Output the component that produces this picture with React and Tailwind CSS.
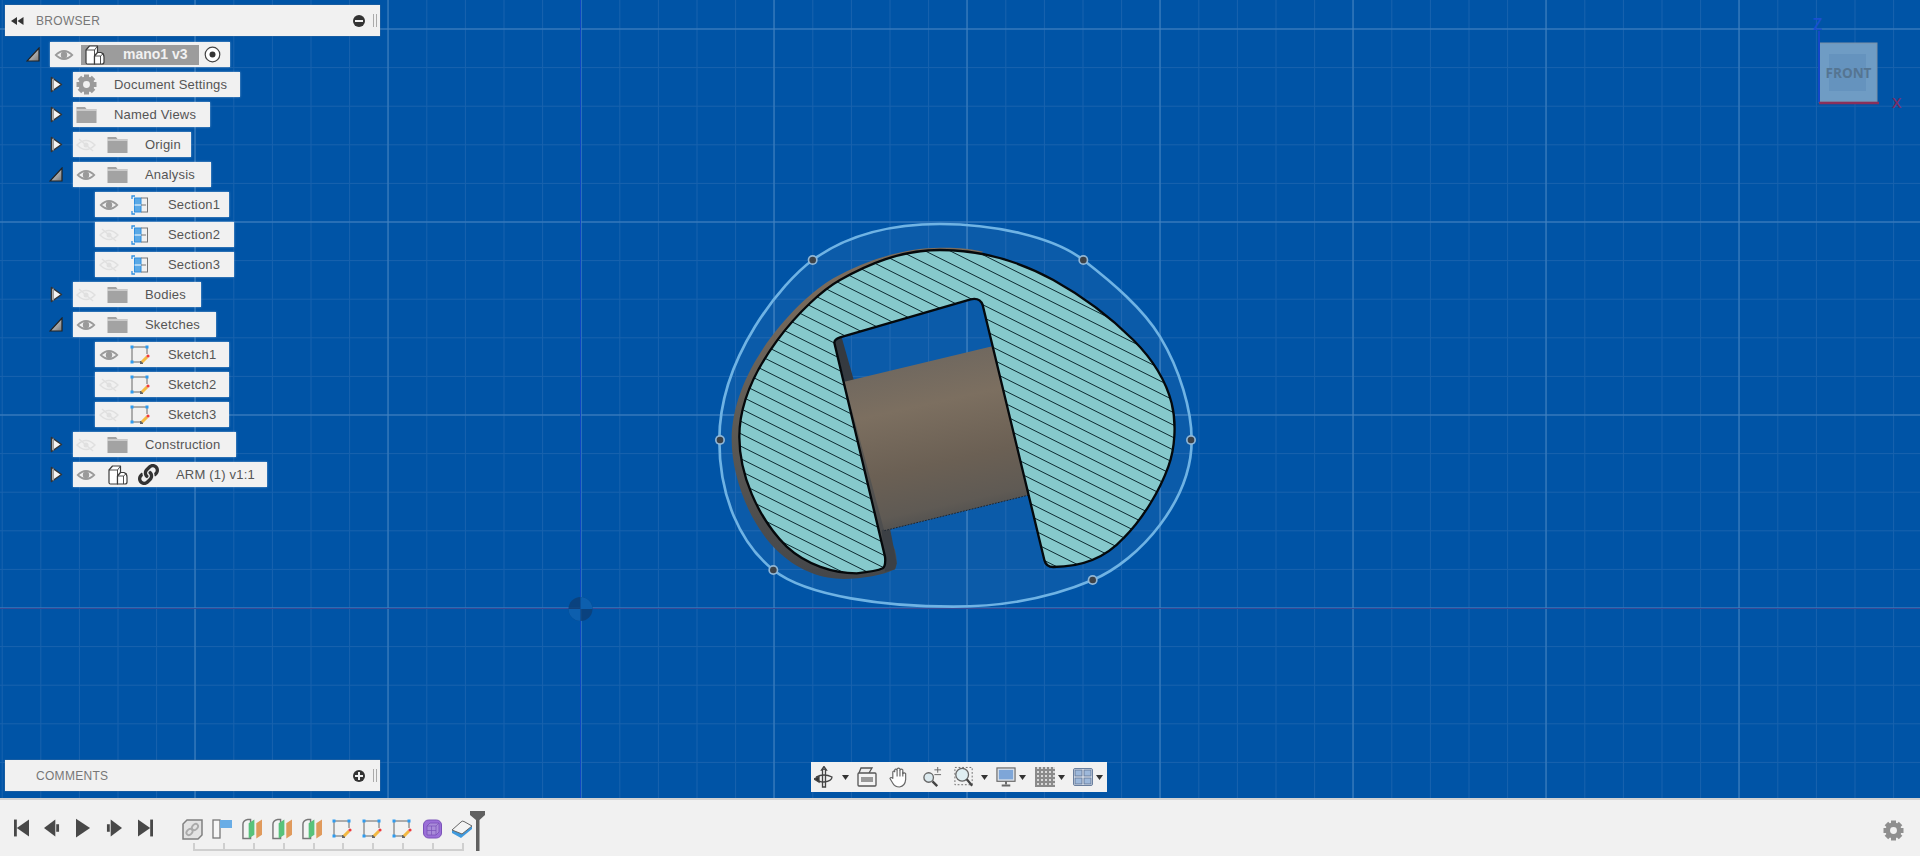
import { FaLink } from 'react-icons/fa'

const FONT = "font-['Liberation_Sans',Arial,sans-serif]"

// grid of the design plane, minor every 38.6px, major every 193px
const minorX = Array.from({ length: 50 }, (_, i) => 2.2 + i * 38.6)
const minorY = Array.from({ length: 22 }, (_, i) => 29 + i * 38.6)
const majorX = Array.from({ length: 10 }, (_, i) => 195 + i * 193)
const majorY = Array.from({ length: 4 }, (_, i) => 29 + i * 193)

const HANDLES = [[338, 150], [1150, 150], [60, 690], [1473, 690], [220, 1080], [1178, 1110]]

const OUTLINE = 'M720 42 C560 42 430 83 338 150 C248 216 58 440 58 690 C58 860 120 1000 220 1080 C320 1160 560 1190 760 1190 C920 1190 1060 1160 1178 1110 C1320 1050 1475 870 1475 690 C1475 600 1440 480 1380 380 C1330 297 1240 220 1150 150 C1060 80 880 42 720 42 Z'

const SECTION = 'M403 398 Q403 388 420 382 L812 268 Q840 262 848 285 L1033 1050 Q1038 1071 1060 1071 C1150 1071 1220 1040 1270 985 C1330 925 1380 840 1405 770 C1425 715 1430 640 1415 580 C1395 500 1350 440 1300 390 C1230 320 1150 260 1060 210 C960 155 840 120 720 120 C600 120 500 165 420 210 C320 266 118 480 118 680 C118 790 170 920 260 1010 C320 1065 400 1090 470 1090 Q530 1084 548 1075 Q558 1068 555 1040 Z'

const BACK = 'M850 125 C800 113 760 113 720 113 C600 113 480 160 400 205 C300 262 95 470 95 690 C95 800 150 950 240 1030 C300 1085 370 1107 430 1107 C490 1107 550 1095 585 1078 Q595 1060 585 1020 L555 950 L430 500 L400 395 Z'

function Viewport() {
  const hatch = Array.from({ length: 42 }, (_, i) => -290 + i * 37.5)
  return (
    <svg className="absolute inset-0 w-full h-full" viewBox="0 0 1920 798">
      <defs>
        <clipPath id="sec"><path d={SECTION} /></clipPath>
        <linearGradient id="cyl" gradientUnits="userSpaceOnUse" x1="660" y1="430" x2="770" y2="930">
          <stop offset="0" stopColor="#6e675f" />
          <stop offset="0.3" stopColor="#7c6f60" />
          <stop offset="0.65" stopColor="#6b6054" />
          <stop offset="0.9" stopColor="#5f5a54" />
          <stop offset="1" stopColor="#50504f" />
        </linearGradient>
        <linearGradient id="back" gradientUnits="userSpaceOnUse" x1="300" y1="200" x2="300" y2="1100">
          <stop offset="0" stopColor="#7b6c5c" />
          <stop offset="0.5" stopColor="#5d5a55" />
          <stop offset="1" stopColor="#45474a" />
        </linearGradient>
      </defs>
      {minorX.map(x => <line key={x} x1={x} x2={x} y1="0" y2="798" stroke="#1963ae" strokeWidth="1" />)}
      {minorY.map(y => <line key={y} x1="0" x2="1920" y1={y} y2={y} stroke="#1963ae" strokeWidth="1" />)}
      {majorX.map(x => <line key={x} x1={x} x2={x} y1="0" y2="798" stroke="#4584c2" strokeWidth="1" />)}
      {majorY.map(y => <line key={y} x1="0" x2="1920" y1={y} y2={y} stroke="#4584c2" strokeWidth="1" />)}
      <line x1="580.500" x2="580.500" y1="0" y2="798" stroke="#0b46c4" strokeWidth="1" />
      <line x1="0" x2="1920" y1="608.500" y2="608.500" stroke="#3a4a96" strokeWidth="1" />
      <circle cx="580.500" cy="609" r="12" fill="#0c3f78" opacity="0.85" />
      <path d="M580.500 597 A12 12 0 0 1 592.500 609 L580.500 609 Z" fill="#0d5fae" />
      <path d="M580.500 621 A12 12 0 0 1 568.500 609 L580.500 609 Z" fill="#0d5fae" />

      <g transform="translate(700 210) scale(0.33333)">
        <path d={OUTLINE} fill="#fff" fillOpacity="0.045" stroke="#6fb3e4" strokeWidth="8" />
        {/* back of the part */}
        <path d={BACK} fill="url(#back)" />
        <path d="M403 395 L425 382 L462 512 L435 520 Z" fill="#353a40" />
        <path d="M545 960 L570 955 L590 1060 L585 1078 L555 1085 Z" fill="#3c4045" />
        <path d="M433 515 L880 408 L987 855 L553 962 Z" fill="url(#cyl)" />
        <path d="M553 962 L987 855" stroke="#1b2430" strokeWidth="3" strokeDasharray="5 4" />
        <path d={SECTION} fill="#86c9cc" />
        <g clipPath="url(#sec)">
          {hatch.map(y => <line key={y} x1="0" x2="1500" y1={y} y2={y + 750} stroke="#0d2a30" strokeWidth="3" />)}
        </g>
        <path d={SECTION} fill="none" stroke="#05090c" strokeWidth="7" strokeLinejoin="round" />
        {HANDLES.map(([x, y]) => (
          <g key={x}>
            <circle cx={x} cy={y} r="15" fill="#8fb6d6" />
            <circle cx={x} cy={y} r="10" fill="#3d4247" />
          </g>
        ))}
      </g>
    </svg>
  )
}

function Gear({ size = 21, color = '#9a9a9a', className }) {
  const teeth = [0, 45, 90, 135, 180, 225, 270, 315]
  return (
    <svg className={className} width={size} height={size} viewBox="0 0 21 21">
      {teeth.map(a => (
        <rect key={a} x="8" y="0.500" width="5" height="5" fill={color} transform={`rotate(${a} 10.500 10.500)`} />
      ))}
      <circle cx="10.500" cy="10.500" r="5.700" fill="none" stroke={color} strokeWidth="4.500" />
    </svg>
  )
}

function Eye({ off }) {
  if (off) {
    return (
      <svg width="20" height="14" viewBox="0 0 20 14" fill="none" stroke="#e0e0e0" strokeWidth="1.500">
        <path d="M1 7 Q10 -2 19 7 Q10 16 1 7 Z" />
        <path d="M3 1 L17 13" />
        <circle cx="10" cy="7" r="2.500" fill="#e0e0e0" stroke="none" />
      </svg>
    )
  }
  return (
    <svg width="20" height="14" viewBox="0 0 20 14" fill="none">
      <path d="M0.500 7 Q10 -3 19.500 7 Q10 17 0.500 7 Z" fill="#9a9a9a" />
      <path d="M3 7 Q10 1 17 7 Q10 13 3 7 Z" fill="#f1f1f1" />
      <circle cx="10" cy="7" r="3.200" fill="#9a9a9a" />
    </svg>
  )
}

function Folder() {
  return (
    <svg width="21" height="18" viewBox="0 0 21 18">
      <path d="M0.500 1 H9 L10.500 3 H20.500 V17 H0.500 Z" fill="#a3a3a3" />
      <path d="M0.500 4 H20.500" stroke="#f1f1f1" strokeWidth="1" />
    </svg>
  )
}

function Body({ size = 20 }) {
  return (
    <svg width={size} height={size} viewBox="0 0 20 20" fill="#fff" stroke="#3c3c3c" strokeWidth="1.200" strokeLinejoin="round">
      <path d="M1 5 L4.500 1 H12.500 V8 L9.500 11 V19 H2.500 Q1 19 1 17.500 Z" />
      <path d="M1 5 H9.500 L12.500 1 M9.500 5 V11" fill="none" strokeWidth="0.900" />
      <path d="M9.500 11 L12.500 7.500 H16 Q19 8.500 19 12 V17 Q19 19 17 19 H9.500 Z" />
      <path d="M9.500 11 H15.500 L18.500 8.500 M15.500 11 V19" fill="none" strokeWidth="0.900" />
    </svg>
  )
}

function SectionIcon() {
  return (
    <svg width="18" height="20" viewBox="0 0 18 20" fill="none">
      <path d="M1 4 V1 H4 M1 16 V19 H4" stroke="#2e8fe0" strokeWidth="1.300" />
      <rect x="3.500" y="3" width="6.500" height="14" fill="#5aa9e6" stroke="#2e8fe0" />
      <path d="M3.500 10 H10" stroke="#fff" strokeWidth="1" />
      <path d="M10 3 H17 M10 10 H15 M10 17 H17 M16.500 3 V17" stroke="#777" strokeWidth="1" />
    </svg>
  )
}

function SketchIcon() {
  return (
    <svg width="20" height="20" viewBox="0 0 20 20" fill="none">
      <path d="M2 2 H17 M2 2 V17 M2 17 H12 M17 2 V9" stroke="#666" strokeWidth="1" />
      <rect x="0.500" y="0.500" width="3" height="3" fill="#2e9bf0" />
      <rect x="15.500" y="0.500" width="3" height="3" fill="#2e9bf0" />
      <rect x="0.500" y="15.500" width="3" height="3" fill="#2e9bf0" />
      <rect x="10" y="16" width="3" height="3" fill="#666" />
      <path d="M12 17 L17 12" stroke="#f4b942" strokeWidth="3" />
      <circle cx="18" cy="11" r="1.600" fill="#ee3b3b" />
    </svg>
  )
}

function Arrow({ open }) {
  if (open) {
    return (
      <svg width="14" height="15" viewBox="0 0 14 15">
        <defs>
          <linearGradient id="tri" x1="0" y1="0" x2="1" y2="1">
            <stop offset="0" stopColor="#eee" />
            <stop offset="1" stopColor="#777" />
          </linearGradient>
        </defs>
        <path d="M13 1 V14 H1 Z" fill="url(#tri)" stroke="#222" strokeWidth="1.200" />
      </svg>
    )
  }
  return (
    <svg width="13" height="17" viewBox="0 0 13 17">
      <path d="M1.500 1.500 L11.500 8.500 L1.500 15.500 Z" fill="#f4f4f4" stroke="#333" strokeWidth="1.500" strokeLinejoin="round" />
      <path d="M3.200 2.500 V14.500" stroke="#999" strokeWidth="1.500" />
    </svg>
  )
}

// one tree row: level shifts the row in from the left
function Row({ level = 0, open, width, children }) {
  const indent = level === 0 ? 'ml-[50px]' : level === 1 ? 'ml-[73px]' : 'ml-[95px]'
  return (
    <div className={`relative h-[25px] flex items-center bg-[#f1f1f1] shadow-[0_0_2px_rgba(255,255,255,0.5)] ${indent}`} style={{ width }}>
      {open !== undefined && (
        <div className="absolute left-[-24px] top-0 h-[25px] w-[14px] flex items-center justify-center">
          <Arrow open={open} />
        </div>
      )}
      {children}
    </div>
  )
}

function Slot({ w, children }) {
  return <div className="flex items-center justify-center flex-none" style={{ width: w }}>{children}</div>
}

function Label({ children, pad }) {
  return <span className={`whitespace-nowrap text-[13px] tracking-[0.2px] text-[#555] pt-px ${pad}`}>{children}</span>
}

function FolderRow({ width, open, off, label }) {
  return (
    <Row level={1} open={open} width={width}>
      <div className="w-[34px] pl-[3px] flex-none"><Eye off={off} /></div>
      <Slot w="21px"><Folder /></Slot>
      <Label pad="pl-[17px]">{label}</Label>
    </Row>
  )
}

function LeafRow({ width, off, label, icon }) {
  return (
    <Row level={2} width={width}>
      <div className="w-[34px] pl-[4px] flex-none"><Eye off={off} /></div>
      <Slot w="21px">{icon}</Slot>
      <Label pad="pl-[18px]">{label}</Label>
    </Row>
  )
}

function Browser() {
  return (
    <div className="absolute left-0 top-0 w-[400px]">
      <div className="ml-[5px] mt-[5px] w-[375px] h-[31px] bg-[#f1f1f1] flex items-center shadow-[0_0_1px_#888]">
        <svg className="ml-[6px]" width="13" height="8" viewBox="0 0 13 8"><path d="M6 0 V8 L0 4 Z M12.500 0 V8 L6.500 4 Z" fill="#333" /></svg>
        <span className="ml-[12px] text-[12px] tracking-[0.3px] text-[#777]">BROWSER</span>
        <div className="ml-auto w-[12px] h-[12px] rounded-full bg-[#333] flex items-center justify-center">
          <div className="w-[8px] h-[2px] bg-[#f1f1f1]" />
        </div>
        <div className="ml-[8px] mr-[3px] w-[4px] h-[13px] border-x border-[#aaa]" />
      </div>
      <div className="mt-[6px] flex flex-col gap-[5px]">
        <Row open width="180px">
          <div className="w-[31px] pl-[4px] flex-none"><Eye /></div>
          <div className="w-[118px] h-[20px] bg-[#9c9c9c] flex items-center flex-none pl-[4px]">
            <Body />
            <span className="ml-[18px] text-[14px] font-bold text-[#f1f1f1]">mano1 v3</span>
          </div>
          <svg className="ml-[5px]" width="17" height="17" viewBox="0 0 17 17">
            <circle cx="8.500" cy="8.500" r="7.300" fill="#fff" stroke="#444" strokeWidth="1.200" />
            <circle cx="8.500" cy="8.500" r="3" fill="#333" />
          </svg>
        </Row>
        <Row level={1} open={false} width="167px">
          <div className="pl-[3px] w-[27px] flex-none"><Gear /></div>
          <Label pad="pl-[14px]">Document Settings</Label>
        </Row>
        <Row level={1} open={false} width="137px">
          <div className="pl-[3px] w-[27px] flex-none"><Folder /></div>
          <Label pad="pl-[14px]">Named Views</Label>
        </Row>
        <FolderRow width="118px" open={false} off label="Origin" />
        <FolderRow width="138px" open label="Analysis" />
        <LeafRow width="134px" label="Section1" icon={<SectionIcon />} />
        <LeafRow width="139px" off label="Section2" icon={<SectionIcon />} />
        <LeafRow width="139px" off label="Section3" icon={<SectionIcon />} />
        <FolderRow width="128px" open={false} off label="Bodies" />
        <FolderRow width="143px" open label="Sketches" />
        <LeafRow width="134px" label="Sketch1" icon={<SketchIcon />} />
        <LeafRow width="134px" off label="Sketch2" icon={<SketchIcon />} />
        <LeafRow width="134px" off label="Sketch3" icon={<SketchIcon />} />
        <FolderRow width="163px" open={false} off label="Construction" />
        <Row level={1} open={false} width="194px">
          <div className="w-[34px] pl-[3px] flex-none"><Eye /></div>
          <Slot w="21px"><Body /></Slot>
          <FaLink className="ml-[10px] text-[21px] text-[#333] flex-none" />
          <Label pad="pl-[17px]">ARM (1) v1:1</Label>
        </Row>
      </div>
    </div>
  )
}

function Comments() {
  return (
    <div className="absolute left-[5px] top-[760px] w-[375px] h-[31px] bg-[#f1f1f1] flex items-center shadow-[0_0_1px_#888]">
      <span className="ml-[31px] text-[12px] tracking-[0.3px] text-[#777]">COMMENTS</span>
      <div className="ml-auto w-[12px] h-[12px] rounded-full bg-[#333] relative">
        <div className="absolute left-[2px] top-[5px] w-[8px] h-[2px] bg-[#f1f1f1]" />
        <div className="absolute left-[5px] top-[2px] w-[2px] h-[8px] bg-[#f1f1f1]" />
      </div>
      <div className="ml-[8px] mr-[3px] w-[4px] h-[13px] border-x border-[#aaa]" />
    </div>
  )
}

function Caret({ className }) {
  return <svg width="7" height="5" viewBox="0 0 7 5" className={`flex-none ${className}`}><path d="M0 0 H7 L3.500 5 Z" fill="#333" /></svg>
}

function NavBar() {
  return (
    <div className="absolute left-[811px] top-[762px] w-[296px] h-[30px] bg-[#f1f1f1] flex items-center pl-[3px]">
      <svg className="flex-none" width="20" height="22" viewBox="0 0 20 22" fill="none" stroke="#444" strokeWidth="1.300">
        <path d="M10 0.500 L7.500 4 H12.500 Z" fill="#888" />
        <path d="M8.500 4 V21 H11.500 V4" fill="#eee" />
        <path d="M2 11 Q10 7 18 11 Q18 15 10 16 Q5 16 3 14" />
        <path d="M0 13 L5 10.500 V16 Z" fill="#333" />
      </svg>
      <Caret className="ml-[8px]" />
      <svg className="ml-[8px] flex-none" width="20" height="20" viewBox="0 0 20 20" fill="none" stroke="#555" strokeWidth="1.300">
        <path d="M2 6 L4 1 L15 1 L12 6" fill="#eee" />
        <rect x="1" y="6" width="18" height="13" rx="1" fill="#f4f4f4" />
        <rect x="4" y="10" width="12" height="5" fill="#999" stroke="none" />
      </svg>
      <svg className="ml-[12px] flex-none" width="20" height="23" viewBox="0 0 21 24" fill="#fff" stroke="#666" strokeWidth="1.200" strokeLinejoin="round">
        <path d="M4 12 V6 Q5 4.500 6 6 V4 Q7 2.500 8.500 4 V3 Q10 1.500 11.500 3 V4 Q13 2.500 14.500 4 V8 Q16 6.500 17.500 8 V14 Q17 21 11 22 Q6 22 4 18 L1 13 Q2 11 4 13 Z" />
        <path d="M8.500 4 V11 M11.500 4 V11 M14.500 6 V11" fill="none" />
      </svg>
      <svg className="ml-[13px] flex-none" width="20" height="20" viewBox="0 0 21 21" fill="none">
        <circle cx="7" cy="11" r="5" fill="#dbe9ee" stroke="#666" strokeWidth="1.400" />
        <path d="M11 15 L16 20" stroke="#444" strokeWidth="2.500" />
        <path d="M13 3 H20 M16.500 0 V6 M13 8 H20" stroke="#666" strokeWidth="1" />
      </svg>
      <svg className="ml-[12px] flex-none" width="20" height="22" viewBox="0 0 22 23" fill="none">
        <rect x="1" y="1" width="19" height="19" stroke="#666" strokeDasharray="2 2" />
        <circle cx="9" cy="9" r="7" fill="#dfeef2" stroke="#666" strokeWidth="1.400" />
        <path d="M14 14 L20 21" stroke="#444" strokeWidth="2.500" />
      </svg>
      <Caret className="ml-[7px]" />
      <svg className="ml-[8px] flex-none" width="20" height="20" viewBox="0 0 21 21" fill="none" stroke="#666" strokeWidth="1.200">
        <rect x="1" y="1" width="19" height="14" fill="#dfe4ea" />
        <rect x="3" y="3" width="15" height="10" fill="#7ea6d8" stroke="none" />
        <path d="M10.500 15 V18 M6 19.500 H15" strokeWidth="2" />
      </svg>
      <Caret className="ml-[3px]" />
      <div className="ml-[9px] w-[20px] h-[20px] flex-none bg-[repeating-linear-gradient(0deg,#8a8a8a_0_2px,#d8d8d8_2px_4px)] relative overflow-hidden">
        <div className="absolute inset-0 bg-[repeating-linear-gradient(90deg,#8a8a8a_0_2px,transparent_2px_4px)]" />
      </div>
      <Caret className="ml-[3px]" />
      <svg className="ml-[8px] flex-none" width="20" height="18" viewBox="0 0 20 18" fill="#9db8da" stroke="#6a7f9e">
        <rect x="0.500" y="0.500" width="19" height="17" rx="1.500" fill="#e8eef6" />
        <rect x="2" y="2" width="7" height="6" />
        <rect x="11" y="2" width="7" height="6" />
        <rect x="2" y="10" width="7" height="6" />
        <rect x="11" y="10" width="7" height="6" />
      </svg>
      <Caret className="ml-[3px]" />
    </div>
  )
}

function ViewCube() {
  return (
    <svg className="absolute left-[1805px] top-0" width="110" height="120" viewBox="0 0 110 120">
      <rect x="14" y="43" width="58" height="59" fill="#6f9cc4" stroke="#7d90a5" />
      <rect x="24" y="54" width="37" height="37" fill="#6593be" />
      <text x="43.500" y="78" textAnchor="middle" fontFamily="'Open Sans',sans-serif" fontWeight="700" fontSize="13.500" fill="#557592">FRONT</text>
      <line x1="14" x2="14" y1="31" y2="102" stroke="#1448c8" strokeWidth="2" />
      <line x1="14" x2="74" y1="103" y2="103" stroke="#8a2f5a" strokeWidth="2.500" />
      <text x="8" y="30" fontFamily="'Open Sans',sans-serif" fontWeight="600" fontSize="16" fill="#1a50d0">Z</text>
      <text x="87" y="108" fontFamily="'Open Sans',sans-serif" fontWeight="600" fontSize="15" fill="#7b2d66">X</text>
    </svg>
  )
}

function Transport() {
  const f = '#484848'
  return (
    <div className="flex items-center w-[177px] flex-none pl-[14px] gap-[15px]">
      <svg width="15" height="18" viewBox="0 0 16 18"><rect x="0" y="0" width="3" height="18" fill={f} /><path d="M16 0 V18 L3 9 Z" fill={f} /></svg>
      <svg width="16" height="18" viewBox="0 0 17 18"><path d="M12 0 V18 L0 9 Z" fill={f} /><rect x="13" y="5" width="3" height="8" fill={f} /></svg>
      <svg width="15" height="20" viewBox="0 0 16 20" className="ml-[1px]"><path d="M0 0 V20 L15 10 Z" fill={f} /></svg>
      <svg width="16" height="18" viewBox="0 0 17 18"><rect x="1" y="5" width="3" height="8" fill={f} /><path d="M5 0 V18 L17 9 Z" fill={f} /></svg>
      <svg width="15" height="18" viewBox="0 0 16 18" className="ml-[1px]"><path d="M0 0 V18 L13 9 Z" fill={f} /><rect x="13" y="0" width="3" height="18" fill={f} /></svg>
    </div>
  )
}

function TimelineSection() {
  return (
    <svg width="20" height="22" viewBox="0 0 21 22">
      <path d="M1 21 V6 Q1 2 6 1 H9 V21 Z" fill="#f4f4f4" stroke="#777" strokeWidth="1.500" />
      <path d="M7 5 L13 1 V17 L7 21 Z" fill="#57c27b" />
      <path d="M15 5 L21 1 V17 L15 21 Z" fill="#e09a5c" />
    </svg>
  )
}

function TimelineFeatures() {
  const items = [
    <svg key="join" width="21" height="21" viewBox="0 0 21 21" fill="none" stroke="#808080" strokeWidth="1.500">
      <path d="M5 1 H20 V16 L16 20 H1 V5 Z" fill="#e3e3e3" />
      <ellipse cx="7.500" cy="13" rx="3.500" ry="2.500" transform="rotate(-45 7.500 13)" stroke="#aaa" strokeWidth="1.800" />
      <ellipse cx="13" cy="8" rx="3.500" ry="2.500" transform="rotate(-45 13 8)" stroke="#aaa" strokeWidth="1.800" />
    </svg>,
    <svg key="flag" width="21" height="20" viewBox="0 0 21 20">
      <rect x="1" y="1" width="7" height="18" fill="#f6f6f6" stroke="#777" strokeWidth="1.300" />
      <rect x="8" y="1" width="12" height="8" fill="#69ade6" />
    </svg>,
    <TimelineSection key="s1" />, <TimelineSection key="s2" />, <TimelineSection key="s3" />,
    <SketchIcon key="k1" />, <SketchIcon key="k2" />, <SketchIcon key="k3" />,
    <svg key="cube" width="19" height="20" viewBox="0 0 19 20">
      <rect x="0.500" y="1" width="18" height="18" rx="5" fill="#9b6fd8" stroke="#7a52b8" />
      <path d="M4 7 L7 4 H16 V13 L13 16 H4 Z" fill="#a98bd9" stroke="#7a52b8" strokeWidth="0.800" />
      <path d="M8.500 7 V16 M4 11.500 H13 M4 7 H13 V16 M13 7 L16 4" fill="none" stroke="#7a52b8" strokeWidth="0.700" />
    </svg>,
    <svg key="plate" width="22" height="20" viewBox="0 0 22 20">
      <path d="M1 11 V14 L10 19 L21 10 V7 Z" fill="#3f9ade" />
      <path d="M1 11 L10 3 Q11 1.500 13 2.500 L21 7 L11 15 Z" fill="#f4f4f4" stroke="#666" />
    </svg>,
  ]
  return (
    <div className="relative w-[300px] flex-none h-full">
      <div className="flex mt-[17px]">
        {items.map((item, i) => (
          <div key={i} className="w-[30px] h-[24px] flex items-center justify-center flex-none">{item}</div>
        ))}
      </div>
      {/* bracket under the features */}
      <div className="absolute left-[16px] top-[43px] h-[8px] w-[271px] border-x-2 border-b-2 border-[#cfcfcf]">
        <div className="h-full flex justify-evenly">
          {items.slice(2).map((_, i) => <div key={i} className="w-[2px] h-full bg-[#cfcfcf]" />)}
        </div>
      </div>
    </div>
  )
}

function Timeline() {
  return (
    <div className="h-[58px] flex-none bg-[#f1f1f1] border-t-2 border-[#d2d2d2] flex items-center relative">
      <Transport />
      <TimelineFeatures />
      <svg className="absolute left-[470px] top-[11px]" width="16" height="41" viewBox="0 0 16 41">
        <path d="M0 0 H15 V4 L9.500 9 V40 H6 V9 L0 4 Z" fill="#606060" />
      </svg>
      <Gear className="absolute left-[1883px] top-[20px]" color="#8f8f8f" />
    </div>
  )
}

export default function App() {
  return (
    <div className={`w-[1920px] h-[856px] flex flex-col overflow-hidden ${FONT}`}>
      <div className="relative flex-1 bg-[#0054a6]">
        <Viewport />
        <Browser />
        <Comments />
        <NavBar />
        <ViewCube />
      </div>
      <Timeline />
    </div>
  )
}
